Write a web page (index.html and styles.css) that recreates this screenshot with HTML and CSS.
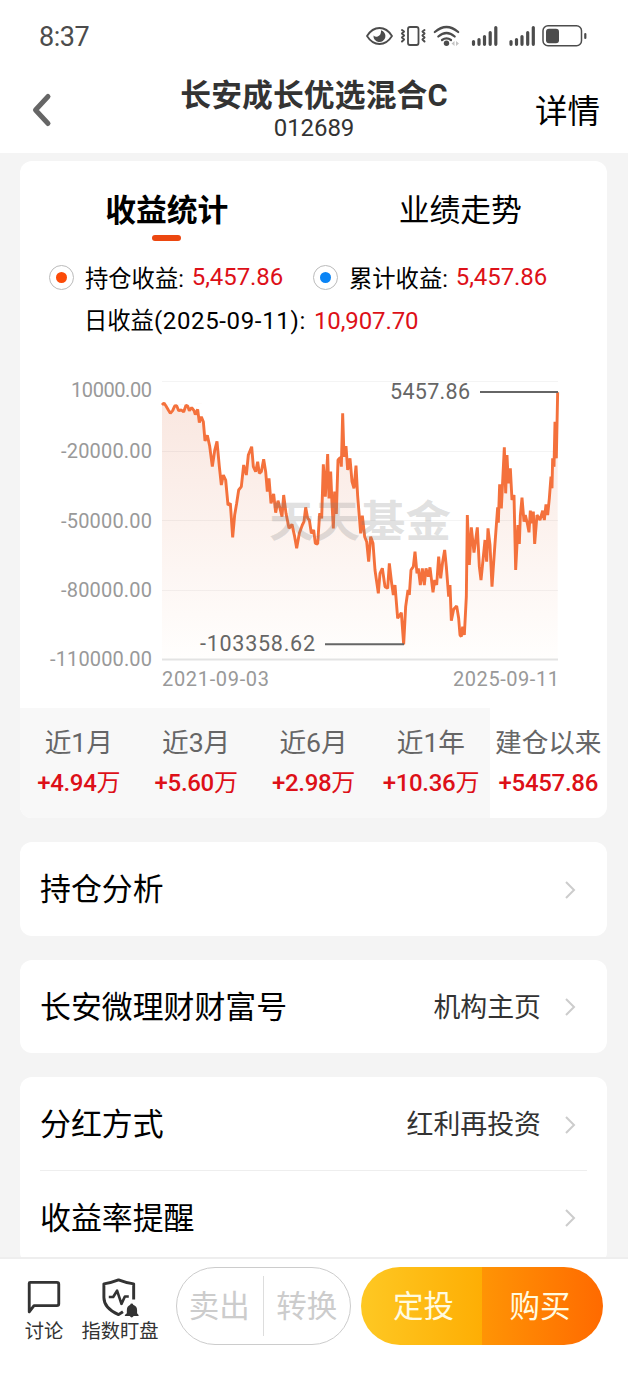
FILE: index.html
```html
<!DOCTYPE html>
<html lang="zh-CN">
<head>
<meta charset="utf-8">
<title>长安成长优选混合C</title>
<link rel="stylesheet" href="styles.css">
</head>
<body>
<div class="app">
  <div class="status">
    <span class="time">8:37</span>
    <svg class="status-icons" width="230" height="32" viewBox="360 20 230 32" fill="none" stroke="#4c4c4c" stroke-width="1.8" stroke-linecap="round" stroke-linejoin="round">
      <path d="M367 36Q372 28 379.5 28T392 36Q387 44 379.5 44T367 36Z"/>
      <path d="M381 30.300a6 6 0 1 1-7.500 5.200q2 2 4.200 1Q381.500 35 381 30.300Z" fill="#4c4c4c" stroke="none"/>
      <rect x="408" y="27" width="10.500" height="18" rx="2"/>
      <path stroke-width="2" d="M402 30l2 1.500-2 2 2 2-2 2 2 2-2 2M424.500 30l-2 1.500 2 2-2 2 2 2-2 2 2 2"/>
      <path stroke-width="2.200" d="M434.800 32Q446.500 22 458.200 32M438.300 36.500Q446.500 29.500 454.700 36.500M442 40Q446.500 36.800 451 40"/>
      <circle cx="446.500" cy="43.300" r="2.700" fill="#4c4c4c" stroke="none"/>
      <path stroke="none" fill="#c4c4c4" d="M454.500 41v5l-3-2.500zM456 41v5l3-2.500z"/>
      <path stroke-width="3.200" d="M473.500 41.500V44.300M479 39.500V44.300M484.500 36.500V44.300M490.200 32.500V44.300M495.800 27.500V44.300M511 41.500V44.300M516.500 39.500V44.300M522 36.500V44.300M527.700 32.500V44.300M533.300 27.500V44.300"/>
      <rect x="543" y="25.800" width="38.500" height="20" rx="5" stroke-width="1.500"/>
      <rect x="546" y="28.800" width="13" height="14.500" rx="3" fill="#4c4c4c" stroke="none"/>
      <path stroke-width="2.200" d="M585.300 34v4"/>
    </svg>
  </div>
  <header class="header">
    <svg class="back" width="22" height="36" viewBox="0 0 22 36" fill="none" stroke="#666" stroke-width="5" stroke-linecap="round" stroke-linejoin="round"><path d="M18 4.500L5.500 18 18 31.500"/></svg>
    <div class="heading"><h1>长安成长优选混合C</h1><p>012689</p></div>
    <a class="detail">详情</a>
  </header>
  <main class="content">
    <section class="card stats">
      <nav class="tabs"><span class="tab on">收益统计</span><span class="tab">业绩走势</span></nav>
      <div class="legend">
        <div class="item"><i class="radio orange"></i><span>持仓收益:</span><b class="num">5,457.86</b></div>
        <div class="item"><i class="radio blue"></i><span>累计收益:</span><b class="num">5,457.86</b></div>
      </div>
      <div class="daily">日收益<span class="date">(2025-09-11):</span><b class="num">10,907.70</b></div>
      <svg class="chart" width="587" height="344" viewBox="20 364 587 344">
        <defs>
          <linearGradient id="area" x1="0" y1="0" x2="0" y2="1"><stop offset="0" stop-color="#f9e6df"/><stop offset="1" stop-color="#fffefd"/></linearGradient>
          <path id="trend" d="M6 105L12 99 18 108 25 120 31 130 38 122 44 108 50 107 56 122 64 120 71 126 78 106 83 108 88 122 95 113 102 122 106 134 113 118 118 158 124 140 130 155 135 213 142 196 149 228 157 290 164 242 171 214 178 290 184 345 190 315 197 330 204 405 211 400 218 502 224 435 230 400 236 360 244 350 251 285 259 315 265 255 275 230 280 290 287 305 293 275 298 310 304 305 311 268 317 305 322 365 327 325 333 400 341 372 347 428 354 392 360 415 366 440 371 375 378 430 387 475 396 463 404 500 410 535 418 490 427 465 432 455 437 412 443 445 448 450 454 490 461 480 466 520 473 522 479 430 485 445 490 283 496 380 503 252 507 385 512 305 516 400 520 475 524 365 529 432 534 270 541 262 544 290 548 130 552 260 558 228 563 300 570 265 576 335 582 355 588 287 593 378 598 440 602 490 607 437 614 500 620 515 626 575 632 500 639 520 645 600 655 670 660 610 667 595 675 650 683 655 688 580 695 640 700 675 705 645 713 745 724 728 731 823 737 710 744 660 748 675 753 600 760 590 765 545 771 610 775 595 781 645 787 595 793 645 798 595 805 620 810 592 819 667 824 630 830 645 836 560 842 625 848 575 854 540 859 590 866 680 870 645 874 752 881 718 890 708 896 745 900 795 904 800 908 770 913 795 919 680 922 435 928 585 934 472 942 548 952 472 958 590 963 630 975 510 980 575 984 475 990 525 996 650 1005 520 1013 412 1015 458 1019 343 1024 415 1033 232 1037 370 1041 255 1045 340 1051 295 1056 390 1062 375 1067 600 1074 465 1078 522 1081 438 1086 383 1092 455 1096 435 1102 460 1107 487 1111 422 1117 460 1120 425 1124 522 1131 435 1140 450 1148 422 1153 450 1158 403 1163 435 1168 385 1173 320 1176 355 1178 265 1182 290 1185 155 1189 265 1193 67"/>
        </defs>
        <g transform="translate(160 370) scale(.33333)">
          <path fill="url(#area)" d="M6 105L1193 67V867H6Z"/>
          <use href="#trend" fill="#fff"/>
          <path stroke="#fff" stroke-width="8" d="M125 101L1180 67"/>
        </g>
        <path class="grid" d="M162 381.500H558M162 451.500H558M162 520.500H558M162 590.500H558"/>
        <path class="axis" d="M162 659.500H558"/>
        <use href="#trend" transform="translate(160 370) scale(.33333)" fill="none" stroke="#f4713c" stroke-width="8.700" stroke-linejoin="bevel"/>
        <text class="watermark" x="269" y="537" textLength="182" lengthAdjust="spacingAndGlyphs">天天基金</text>
        <g class="tick">
          <text x="71" y="397" textLength="81">10000.00</text>
          <text x="61" y="458" textLength="91">-20000.00</text>
          <text x="61" y="527.500" textLength="91">-50000.00</text>
          <text x="61" y="597" textLength="91">-80000.00</text>
          <text x="50" y="666" textLength="102">-110000.00</text>
          <text x="162" y="686" textLength="107">2021-09-03</text>
          <text x="453" y="686" textLength="106">2025-09-11</text>
        </g>
        <path class="leader" d="M480 392H558M325 644.300H404"/>
        <g class="peak"><text x="390" y="399" textLength="80">5457.86</text><text x="200" y="651" textLength="115">-103358.62</text></g>
      </svg>
      <div class="periods">
        <div class="period"><span>近1月</span><b>+4.94<i>万</i></b></div>
        <div class="period"><span>近3月</span><b>+5.60<i>万</i></b></div>
        <div class="period"><span>近6月</span><b>+2.98<i>万</i></b></div>
        <div class="period"><span>近1年</span><b>+10.36<i>万</i></b></div>
        <div class="period current"><span>建仓以来</span><b>+5457.86</b></div>
      </div>
    </section>
    <section class="card"><div class="row"><span>持仓分析</span><svg class="chev" viewBox="0 0 12 20"><path d="M2 2l8 8-8 8"/></svg></div></section>
    <section class="card"><div class="row"><span>长安微理财财富号</span><em>机构主页</em><svg class="chev" viewBox="0 0 12 20"><path d="M2 2l8 8-8 8"/></svg></div></section>
    <section class="card">
      <div class="row"><span>分红方式</span><em>红利再投资</em><svg class="chev" viewBox="0 0 12 20"><path d="M2 2l8 8-8 8"/></svg></div>
      <hr class="sep">
      <div class="row"><span>收益率提醒</span><svg class="chev" viewBox="0 0 12 20"><path d="M2 2l8 8-8 8"/></svg></div>
    </section>
  </main>
  <footer class="footer">
    <div class="tool talk">
      <svg width="38" height="42" viewBox="0 0 38 42" fill="none" stroke="#333" stroke-width="3" stroke-linejoin="round"><path d="M4.500 3.500H32.500Q34.500 3.500 34.500 5.500V26Q34.500 28 32.500 28H8.500L3.500 34.500V4.500Q3.500 3.500 4.500 3.500Z"/></svg>
      <span>讨论</span>
    </div>
    <div class="tool watch">
      <svg width="42" height="42" viewBox="0 0 42 42" fill="none" stroke="#333" stroke-width="3" stroke-linejoin="round">
        <path d="M35 22V6Q27 5 19.500 2 12 5 4.500 6V20Q4.500 31 19.500 37.500L24 34.500"/>
        <path stroke-width="2.700" d="M9.500 19.500H14L18 13 22.500 26.500 26 19H30"/>
        <path fill="#333" stroke="none" d="M33 26a1.500 1.500 0 0 1 1.500 1.500Q38.500 29 38.500 33V36L40 38V39H35Q33 42 31 39H26V38L28 36V33Q28 29 31.500 27.500A1.500 1.500 0 0 1 33 26Z"/>
      </svg>
      <span>指数盯盘</span>
    </div>
    <div class="pill off"><span>卖出</span><span>转换</span></div>
    <div class="pill trade"><span>定投</span><span>购买</span></div>
  </footer>
</div>
</body>
</html>
```
FILE: styles.css
```css
* { box-sizing: border-box; }
body { margin: 0; background: #f4f4f4; color: #000; font-family: Roboto, "Noto Sans CJK SC", sans-serif; }
h1, p { margin: 0; }
i, em { font-style: normal; }
.app { width: 628px; height: 1380px; display: flex; flex-direction: column; overflow: hidden; }
.status { height: 72px; flex: none; background: #fff; display: flex; justify-content: space-between; align-items: center; padding: 0 38px 0 39px; }
.time { font-size: 27px; color: #4c4c4c; line-height: 30px; padding-top: 2px; letter-spacing: -.5px; }
.status-icons { flex: none; }
.header { height: 81px; flex: none; background: #fff; display: grid; grid-template-columns: 150px 1fr 150px; padding: 0 28px; }
.back { margin: 20px 0 0 2px; }
.heading { text-align: center; color: #333; white-space: nowrap; }
.heading h1 { font-size: 30.8px; line-height: 40px; font-weight: 700; padding-top: 4px; letter-spacing: .1px; }
.heading p { font-size: 24px; line-height: 26px; letter-spacing: -.1px; margin-top: -1px; }
.detail { justify-self: end; font-size: 32.5px; line-height: 40px; margin-top: 20px; }
.content { flex: 1; min-height: 0; overflow: hidden; padding: 8px 21px 0 20px; display: flex; flex-direction: column; gap: 24px; }
.card { flex: none; background: #fff; border-radius: 12px; overflow: hidden; }
.stats { height: 657px; }
.tabs { display: grid; grid-template-columns: 1fr 1fr; height: 95px; padding-top: 29px; }
.tab { display: flex; flex-direction: column; align-items: center; font-size: 30.8px; line-height: 42px; }
.on { font-weight: 700; }
.on::after { content: ""; width: 29px; height: 6px; margin-top: 3px; border-radius: 3px; background: #ec4710; }
.legend { display: flex; height: 42px; align-items: center; padding-left: 29px; font-size: 23.300px; }
.item { display: flex; align-items: center; width: 264px; }
.radio { width: 25px; height: 25px; border: 1px solid #bbb; border-radius: 50%; display: grid; place-items: center; margin-right: 11px; }
.radio::after { content: ""; width: 11px; height: 11px; border-radius: 50%; background: #fc4b08; }
.blue::after { background: #0a84f5; }
.num { font-weight: 400; font-size: 24px; color: #dd1018; margin-left: 8px; letter-spacing: -.1px; }
.daily { height: 66px; padding: 8px 0 0 64px; font-size: 23.300px; line-height: 30px; white-space: nowrap; }
.date { font-size: 24px; letter-spacing: .65px; }
.chart { display: block; }
.grid { stroke: #000; stroke-opacity: .045; }
.axis { stroke: #e3e3e3; stroke-width: 2; }
.watermark { font: 700 43px "Noto Sans CJK SC", sans-serif; fill: #777; fill-opacity: .22; }
.tick { font-size: 20px; fill: #999; }
.peak { font-size: 21.500px; fill: #666; }
.leader { stroke: #666; stroke-width: 2; }
.periods { display: grid; grid-template-columns: repeat(5, 1fr); height: 110px; background: #f8f8f8; }
.period { display: flex; flex-direction: column; align-items: center; padding-top: 17px; white-space: nowrap; }
.period span { font-size: 26.700px; line-height: 36px; color: #666; letter-spacing: -.1px; }
.period b { font-size: 24px; line-height: 34px; margin-top: 5px; font-weight: 500; color: #dd1018; letter-spacing: -.3px; }
.period i { font-weight: 400; }
.current { background: #fff; }
.row { height: 93.500px; display: flex; align-items: center; padding: 0 31px 0 20px; font-size: 30.900px; }
.row em { font-size: 26.900px; color: #333; margin-top: -2px; }
.row span { flex: 1; margin-top: -4px; }
.chev { width: 12px; height: 20px; margin-left: 23px; margin-top: 2px; fill: none; stroke: #ccc; stroke-width: 2; }
.sep { border: 0; height: 1px; background: #eee; margin: -1px 20px 0; }
.footer { height: 123px; flex: none; background: #fff; border-top: 2px solid #eee; display: flex; align-items: flex-start; padding: 8px 25px 0 24px; }
.tool { display: flex; flex-direction: column; align-items: center; color: #333; font-size: 19.300px; line-height: 26px; padding-top: 11px; white-space: nowrap; }
.talk { width: 40px; padding-top: 12px; }
.tool svg { display: block; }
.talk svg { height: 40px; }
.watch { width: 78px; margin-left: 17px; }
.watch svg { height: 41px; }
.pill { height: 78px; border-radius: 39px; display: grid; grid-template-columns: 1fr 1fr; font-size: 30.500px; text-align: center; overflow: hidden; flex: none; }
.off { width: 175px; margin-left: 17px; border: 1px solid #ccc; color: #ccc; line-height: 78px; }
.off span:first-child { background: linear-gradient(#ddd, #ddd) right 8px / 1px 60px no-repeat; padding-right: 2px; }
.trade { width: 242px; margin-left: 10px; color: #fffbe0; line-height: 80px; }
.trade span:first-child { background: linear-gradient(90deg, #fec823, #feae04); padding-left: 4px; }
.trade span:last-child { background: linear-gradient(90deg, #ff9405, #ff6a00); padding-right: 5px; }
```
